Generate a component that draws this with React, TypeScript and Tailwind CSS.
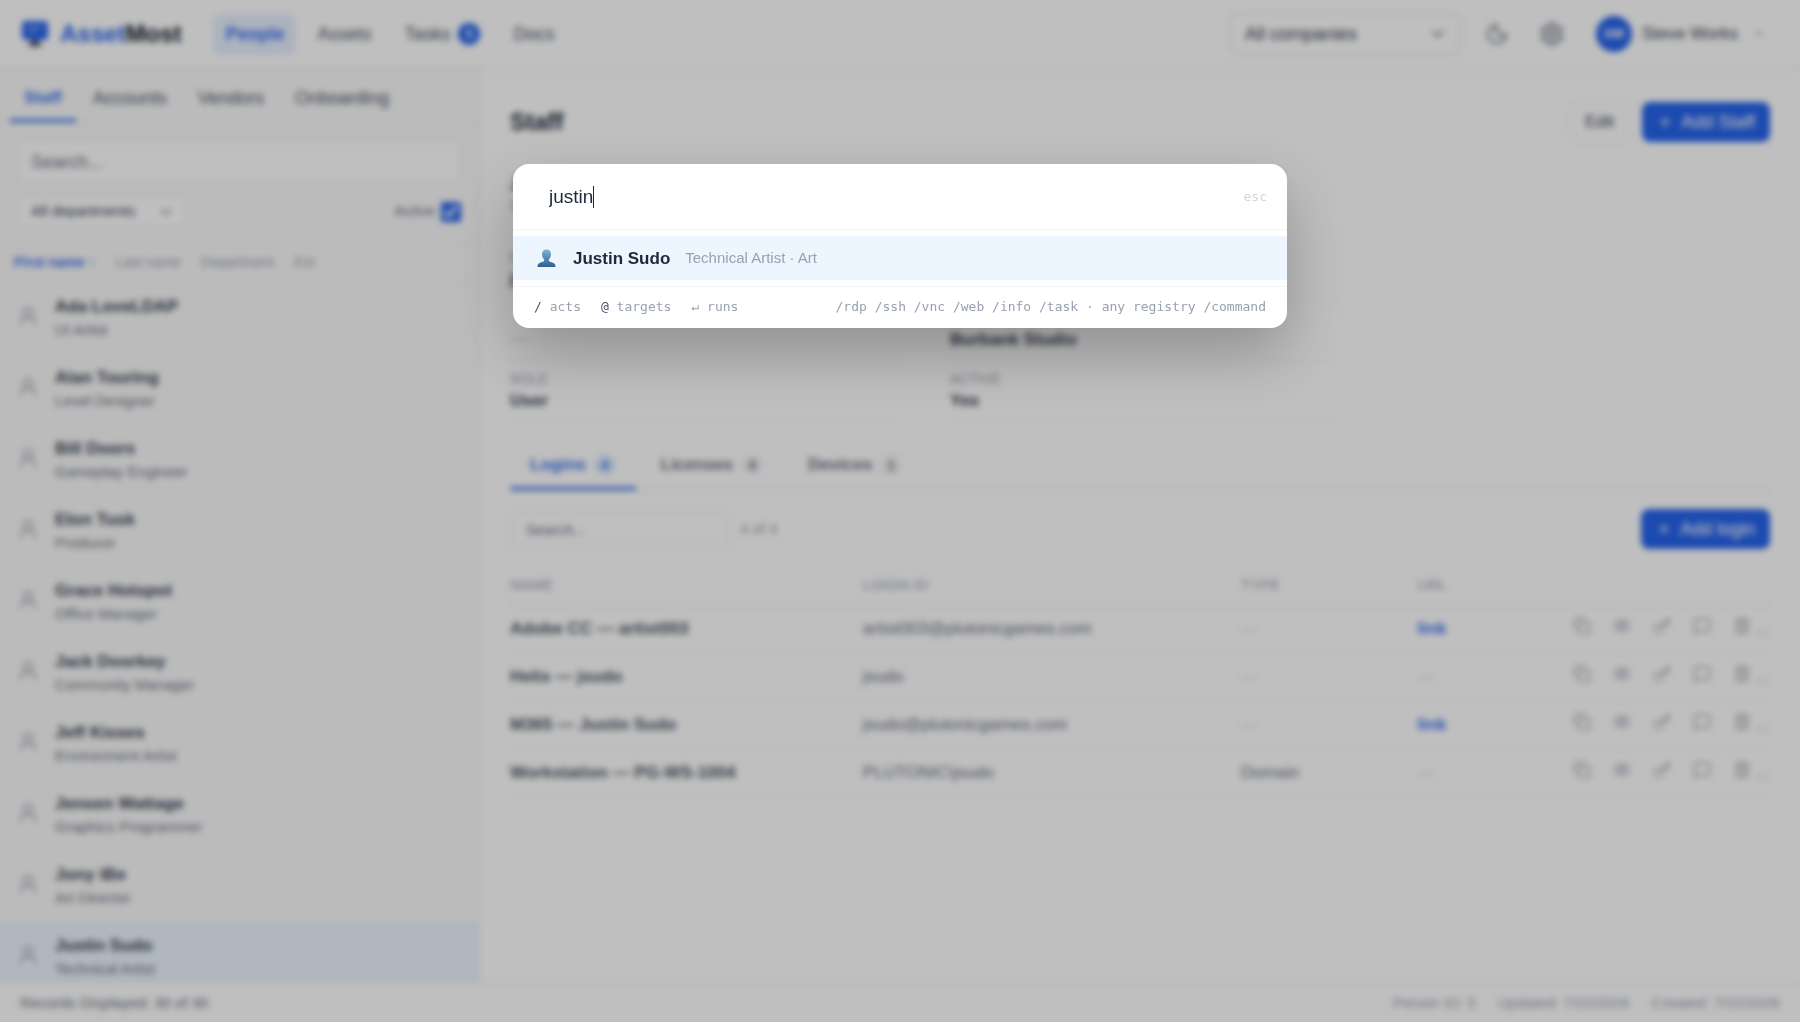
import {
  ChevronDown,
  Copy,
  Eye,
  Key,
  MessageSquare,
  Moon,
  Plus,
  Settings,
  Trash2,
  UserRound,
} from "lucide-react";

const people = [
  { name: "Ada LoveLDAP", title: "UI Artist" },
  { name: "Alan Touring", title: "Level Designer" },
  { name: "Bill Doors", title: "Gameplay Engineer" },
  { name: "Elon Tusk", title: "Producer" },
  { name: "Grace Hotspot", title: "Office Manager" },
  { name: "Jack Doorkey", title: "Community Manager" },
  { name: "Jeff Kisses", title: "Environment Artist" },
  { name: "Jensen Wattage", title: "Graphics Programmer" },
  { name: "Jony iBe", title: "Art Director" },
  { name: "Justin Sudo", title: "Technical Artist" },
];

const logins = [
  { name: "Adobe CC — artist003", id: "artist003@plutonicgames.com", type: "", url: true },
  { name: "Helix — jsudo", id: "jsudo", type: "", url: false },
  { name: "M365 — Justin Sudo", id: "jsudo@plutonicgames.com", type: "", url: true },
  { name: "Workstation — PG-WS-1004", id: "PLUTONIC\\jsudo", type: "Domain", url: false },
];

const actions = [
  { label: "Copy", icon: Copy },
  { label: "Show", icon: Eye },
  { label: "Password", icon: Key },
  { label: "Note", icon: MessageSquare },
  { label: "Delete", icon: Trash2 },
];

function Logo() {
  return (
    <svg width="28" height="28" viewBox="0 0 28 28" fill="none">
      <rect x="1" y="1" width="26" height="19" rx="4" fill="#2563eb" />
      <path d="M7 7h14M7 11h8" stroke="#93b4f8" strokeWidth="2" />
      <path d="M12 20h4v3h4v3H8v-3h4z" fill="#111827" />
    </svg>
  );
}

function Header() {
  return (
    <header className="flex h-[69px] shrink-0 items-center border-b border-neutral-200 bg-white pl-[21px] pr-[34px]">
      <a href="#" className="flex items-center gap-[11px] text-2xl font-bold text-gray-900">
        <Logo />
        <span>
          <span className="text-[#2563eb]">Asset</span>Most
        </span>
      </a>
      <nav className="ml-8 flex items-center gap-[9px] text-[18px] text-gray-600">
        <a href="#" className="rounded-lg bg-[#e6effe] px-3 py-[7px] font-bold text-[#3b70ed]">
          People
        </a>
        <a href="#" className="px-3 py-[7px]">
          Assets
        </a>
        <a href="#" className="flex items-center gap-2 px-3 py-[7px]">
          Tasks
          <span className="flex h-[22px] w-[22px] items-center justify-center rounded-full bg-[#2563eb] text-[13px] font-bold text-white">
            5
          </span>
        </a>
        <a href="#" className="px-3 py-[7px]">
          Docs
        </a>
      </nav>
      <div className="ml-auto flex items-center">
        <div className="relative">
          <select
            aria-label="Company"
            className="h-[42px] w-[232px] appearance-none rounded-lg border border-gray-300 bg-white px-[15px] text-[18px] text-gray-700"
          >
            <option>All companies</option>
          </select>
          <ChevronDown size={20} className="absolute right-[13px] top-[11px] text-gray-600" />
        </div>
        <button aria-label="Dark mode" className="ml-6 text-gray-500">
          <Moon size={24} />
        </button>
        <button aria-label="Settings" className="ml-[30px] text-gray-500">
          <Settings size={26} />
        </button>
        <button className="ml-[31px] flex items-center text-[17px] text-gray-700">
          <span className="flex h-9 w-9 items-center justify-center rounded-full bg-[#2563eb] text-[13px] font-bold text-white">
            SW
          </span>
          <span className="ml-[10px]">Steve Works</span>
          <ChevronDown size={14} className="ml-[14px] text-gray-400" />
        </button>
      </div>
    </header>
  );
}

function Sidebar() {
  return (
    <aside className="flex w-[480px] shrink-0 flex-col border-r border-neutral-200 bg-neutral-50">
      <nav className="flex h-[54px] shrink-0 gap-[3px] border-b border-neutral-200 px-[10px] text-[18px] text-gray-600">
        <a href="#" className="border-b-[3px] border-[#2563eb] px-[14px] pt-4 text-[17px] font-bold text-[#3b70ed]">
          Staff
        </a>
        <a href="#" className="px-[14px] pt-4">
          Accounts
        </a>
        <a href="#" className="px-[14px] pt-4">
          Vendors
        </a>
        <a href="#" className="px-[14px] pt-4">
          Onboarding
        </a>
      </nav>
      <div className="shrink-0 border-b border-neutral-200 px-[18px] pb-[15px] pt-[17px]">
        <input
          type="text"
          aria-label="Search staff"
          placeholder="Search..."
          className="h-[44px] w-full rounded-lg border border-neutral-200 bg-white px-3 text-[18px] placeholder:text-gray-500"
        />
        <div className="mt-3 flex items-center justify-between text-[15px] text-gray-500">
          <div className="relative">
            <select
              aria-label="Department"
              className="h-[31px] w-[168px] appearance-none rounded-md border border-neutral-200 bg-white px-3 text-gray-700"
            >
              <option>All departments</option>
            </select>
            <ChevronDown size={18} className="absolute right-[11px] top-[7px] text-gray-500" />
          </div>
          <label className="flex items-center gap-[6px]">
            Active
            <input type="checkbox" defaultChecked className="h-5 w-5 accent-[#2563eb]" />
          </label>
        </div>
      </div>
      <div className="flex h-10 shrink-0 items-center gap-5 border-b border-neutral-200 px-[14px] text-[14px] text-gray-400">
        <button className="font-bold text-[#3b70ed]">First name ↑</button>
        <button>Last name</button>
        <button>Department</button>
        <button>Ext</button>
      </div>
      <ul className="min-h-0 flex-1 overflow-hidden">
        {people.map((p) => (
          <li
            key={p.name}
            className={`flex gap-4 px-[17px] pb-[14px] pt-3 ${
              p.name === "Justin Sudo" ? "bg-[#ecf5ff]" : ""
            }`}
          >
            <UserRound size={22} className="mt-[10px] text-gray-400" />
            <div>
              <p className="text-[17px] font-bold leading-6 text-gray-700">{p.name}</p>
              <p className="text-[15px] leading-[21px] text-gray-500">{p.title}</p>
            </div>
          </li>
        ))}
      </ul>
    </aside>
  );
}

function Field({ label, value }: any) {
  return (
    <div className="h-[61px] border-b border-neutral-100 pt-2">
      <dt className="h-5 text-[14px] leading-5 text-gray-400">{label}</dt>
      <dd className="text-[17px] font-bold leading-6 text-gray-700">
        {value || <span className="text-gray-300">—</span>}
      </dd>
    </div>
  );
}

function Tab({ label, count, active }: any) {
  return (
    <button
      className={`flex items-center gap-2 border-b-[3px] px-5 text-[17px] font-bold ${
        active ? "border-[#2563eb] text-[#3b70ed]" : "border-transparent text-gray-500"
      }`}
    >
      {label}
      <span
        className={`rounded-full px-[7px] text-[14px] leading-5 ${active ? "bg-blue-100" : "bg-gray-100"}`}
      >
        {count}
      </span>
    </button>
  );
}

function AddButton({ label }: any) {
  return (
    <button className="flex h-10 items-center gap-2 rounded-lg bg-[#2563eb] px-[15px] text-[18px] text-white">
      <Plus size={16} />
      {label}
    </button>
  );
}

function Main() {
  return (
    <main className="min-w-0 flex-1 bg-white px-[30px] pt-8">
      <div className="flex h-[42px] items-center">
        <h1 className="text-2xl font-bold text-gray-800">Staff</h1>
        <button className="ml-auto mr-[14px] h-10 rounded-lg border border-neutral-200 px-[13px] text-[17px] text-gray-700">
          Edit
        </button>
        <AddButton label="Add Staff" />
      </div>
      <div className="mt-[30px] h-[66px]">
        <h2 className="text-[17px] font-bold leading-6 text-gray-800">Justin Sudo</h2>
        <p className="text-[15px] leading-5 text-gray-500">Technical Artist</p>
      </div>
      <dl className="grid w-[830px] grid-cols-2 gap-x-[50px]">
        <Field label="EMAIL" value="jsudo@plutonicgames.com" />
        <Field label="DEPARTMENT" value="Art" />
        <Field />
        <Field value="Burbank Studio" />
        <Field label="ROLE" value="User" />
        <Field label="ACTIVE" value="Yes" />
      </dl>
      <div className="mt-[21px] flex h-[48px] gap-[5px] border-b border-neutral-200">
        <Tab label="Logins" count={4} active />
        <Tab label="Licenses" count={4} />
        <Tab label="Devices" count={1} />
      </div>
      <div className="mt-[18px] flex items-center">
        <input
          type="text"
          aria-label="Search logins"
          placeholder="Search..."
          className="h-[38px] w-[220px] rounded-lg border border-neutral-200 px-[15px] text-[15px] placeholder:text-gray-500"
        />
        <span className="ml-[10px] mr-auto text-[15px] text-gray-400">4 of 4</span>
        <AddButton label="Add login" />
      </div>
      <table className="mt-4 w-full table-fixed text-left text-[17px]">
        <thead>
          <tr className="h-[40px] border-b border-neutral-200 text-[15px] text-gray-400">
            <th className="w-[28%] font-normal">NAME</th>
            <th className="w-[30%] font-normal">LOGIN ID</th>
            <th className="w-[14%] font-normal">TYPE</th>
            <th className="w-[10%] font-normal">URL</th>
            <th aria-label="Actions" />
          </tr>
        </thead>
        <tbody>
          {logins.map((l) => (
            <tr key={l.name} className="h-12 border-b border-neutral-100 text-gray-500">
              <td className="font-bold text-gray-600">{l.name}</td>
              <td>{l.id}</td>
              <td>{l.type || <span className="text-gray-300">—</span>}</td>
              <td>
                {l.url ? (
                  <a href="#" className="font-bold text-[#3b70ed]">
                    link
                  </a>
                ) : (
                  <span className="text-gray-300">—</span>
                )}
              </td>
              <td>
                <div className="flex items-center justify-end gap-[22px] text-gray-400">
                  {actions.map(({ label, icon: Icon }) => (
                    <button key={label} aria-label={label} className="mb-[6px]">
                      <Icon size={18} />
                    </button>
                  ))}
                  <span className="-ml-[18px] text-[15px] text-gray-500">…</span>
                </div>
              </td>
            </tr>
          ))}
        </tbody>
      </table>
    </main>
  );
}

function Palette() {
  return (
    <div className="fixed inset-0 flex items-start justify-center bg-black/25 pt-[16vh] backdrop-blur-[3px]">
      <div
        role="dialog"
        aria-label="Command palette"
        className="w-[774px] overflow-hidden rounded-2xl bg-white shadow-[0_25px_60px_rgba(0,0,0,0.25)]"
      >
        <div className="flex h-[66px] items-center border-b border-gray-100 pl-9 pr-5 pt-[2px]">
          <input
            type="text"
            aria-label="Command"
            defaultValue="justin"
            className="text-[19px] text-gray-800 outline-none [field-sizing:content]"
          />
          {/* text cursor */}
          <span className="h-[22px] w-px bg-gray-800" />
          <kbd className="ml-auto font-['DejaVu_Sans_Mono',monospace] text-[13px] text-gray-300">esc</kbd>
        </div>
        <div className="py-[6px]">
          <button className="flex h-[44px] w-full items-center bg-[#edf5ff] px-6 pt-[2px] text-left">
            <svg width="19" height="19" viewBox="0 0 19 19">
              <defs>
                <linearGradient id="bust" x1="0" y1="0" x2="0" y2="1">
                  <stop offset="0" stopColor="#7fb2d6" />
                  <stop offset="1" stopColor="#2f5f8f" />
                </linearGradient>
              </defs>
              <path
                d="M9.500 .5c2.900 0 4.600 2 4.500 4.900-.1 2.300-1 4-2.200 5v1.400c.2 1.300 5.700 1.500 6.400 4 .2.800.3 1.600.3 2.200H.5c0-.6.1-1.400.3-2.200.7-2.500 6.200-2.700 6.400-4v-1.400c-1.200-1-2.100-2.700-2.200-5C4.900 2.500 6.600.5 9.500.5z"
                fill="url(#bust)"
              />
            </svg>
            <span className="ml-[17px] text-[17px] font-bold text-gray-800">Justin Sudo</span>
            <span className="ml-[15px] text-[15px] text-gray-400">Technical Artist · Art</span>
          </button>
        </div>
        <div className="flex h-[42px] items-center gap-5 border-t border-gray-100 px-[21px] font-['DejaVu_Sans_Mono',monospace] text-[13px] text-gray-400">
          <span>
            <span className="text-gray-600">/</span> acts
          </span>
          <span>
            <span className="text-gray-600">@</span> targets
          </span>
          <span>↵ runs</span>
          <span className="ml-auto">/rdp /ssh /vnc /web /info /task · any registry /command</span>
        </div>
      </div>
    </div>
  );
}

export default function App() {
  return (
    <div className="flex h-screen flex-col font-['Liberation_Sans',Arial,sans-serif]">
      <Header />
      <div className="flex min-h-0 flex-1">
        <Sidebar />
        <Main />
      </div>
      <footer className="flex h-10 shrink-0 items-center gap-[22px] border-t border-neutral-200 bg-white px-5 pt-[2px] text-[15px] text-gray-400">
        <span className="mr-auto text-gray-500">Records Displayed: 30 of 30</span>
        <span>Person ID: 5</span>
        <span>Updated: 7/22/2026</span>
        <span>Created: 7/22/2026</span>
      </footer>
      <Palette />
    </div>
  );
}
